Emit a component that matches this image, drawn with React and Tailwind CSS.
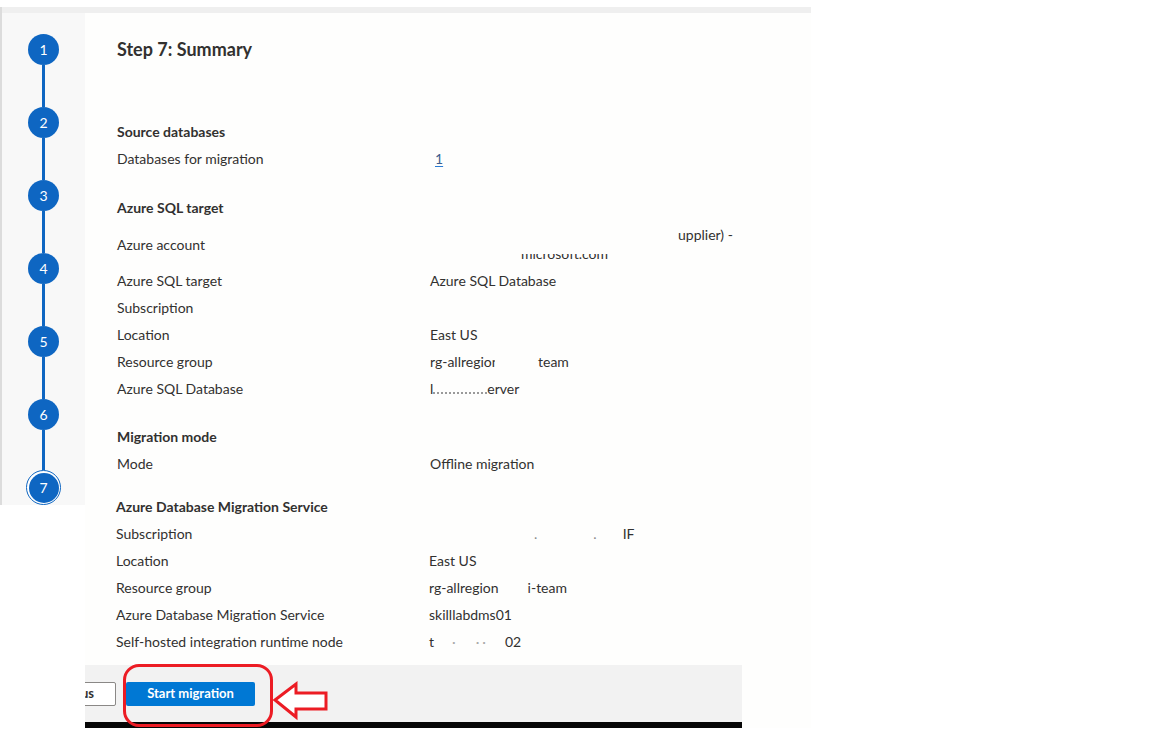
import React from "react";

const Circle = ({ n }) => (
  <div className="w-[31px] h-[31px] shrink-0 rounded-full bg-[#0e66c2] text-white text-[14px] flex items-center justify-center">
    {n}
  </div>
);

const Line = ({ h }) => <div className={`w-[3px] bg-[#0e66c2] ${h}`} />;

const Heading = ({ children }) => (
  <div className="h-[27px] flex items-center font-bold text-[#323130]">{children}</div>
);

const Row = ({ label, children, tall }) => (
  <div className={`flex items-center ${tall ? "h-[46px]" : "h-[27px]"}`}>
    <div className="w-[313px] shrink-0 whitespace-nowrap">{label}</div>
    <div className="whitespace-nowrap">{children}</div>
  </div>
);

export default function App() {
  return (
    <div className="relative w-[1152px] h-[740px] overflow-hidden bg-white pt-[7px] [font-family:Lato,'Segoe_UI',sans-serif] text-[14px] leading-[19px] text-[#323130]">
      <div className="h-[6px] w-[811px] bg-[#efefef] border-l-2 border-[#dcdcdc]" />
      <div className="flex">
        <aside className="w-[85px] h-[492px] shrink-0 border-l-2 border-[#dcdcdc] bg-[#f8f8f8] flex flex-col items-center pt-[21px]">
          <Circle n="1" />
          <Line h="h-[42px]" />
          <Circle n="2" />
          <Line h="h-[42px]" />
          <Circle n="3" />
          <Line h="h-[42px]" />
          <Circle n="4" />
          <Line h="h-[42px]" />
          <Circle n="5" />
          <Line h="h-[42px]" />
          <Circle n="6" />
          <Line h="h-[40px]" />
          <div className="w-[35px] h-[35px] rounded-full border-[1.5px] border-[#0e66c2] bg-white p-[1.5px]">
            <div className="w-full h-full rounded-full bg-[#0e66c2] text-white text-[14px] flex items-center justify-center">
              7
            </div>
          </div>
        </aside>

        <main className="w-[726px] bg-[#fefefd]">
          <div className="pl-[32px] pt-[24px]">
            <h1 className="h-[24px] leading-[24px] text-[18px] font-bold text-[#323130]">Step 7: Summary</h1>

            <section className="mt-[57px]">
              <Heading>Source databases</Heading>
              <Row label="Databases for migration">
                <span className="pl-[5px] text-[#3d5f8e] underline decoration-[#2b7cd3] underline-offset-2">1</span>
              </Row>
            </section>

            <section className="mt-[22px]">
              <Heading>Azure SQL target</Heading>
              <Row label="Azure account" tall>
                <div>
                  <div className="pl-[248px]">upplier) -</div>
                  <div className="pl-[91px] [clip-path:inset(10px_0_0_0)]">microsoft.com</div>
                </div>
              </Row>
              <Row label="Azure SQL target">Azure SQL Database</Row>
              <Row label="Subscription"></Row>
              <Row label="Location">East US</Row>
              <Row label="Resource group">
                <div className="flex">
                  <span className="inline-block w-[65px] overflow-hidden">rg-allregion</span>
                  <span className="ml-[43px]">team</span>
                </div>
              </Row>
              <Row label="Azure SQL Database">
                <div className="flex items-end">
                  <span>l</span>
                  <span className="inline-block w-[54px] mb-[4px] border-b-2 border-dotted border-[#9a9a9a]" />
                  <span>erver</span>
                </div>
              </Row>
            </section>

            <section className="mt-[21px]">
              <Heading>Migration mode</Heading>
              <Row label="Mode">Offline migration</Row>
            </section>

            <section className="mt-[16px] -ml-px">
              <Heading>Azure Database Migration Service</Heading>
              <Row label="Subscription">
                <div className="flex text-[#8a8a8a]">
                  <span className="pl-[105px]">.</span>
                  <span className="pl-[56px]">.</span>
                  <span className="pl-[26px] text-[#323130]">IF</span>
                </div>
              </Row>
              <Row label="Location">East US</Row>
              <Row label="Resource group">
                <div className="flex">
                  <span>rg-allregion</span>
                  <span className="ml-[29px]">i-team</span>
                </div>
              </Row>
              <Row label="Azure Database Migration Service">skilllabdms01</Row>
              <Row label="Self-hosted integration runtime node">
                <div className="flex">
                  <span>t</span>
                  <span className="pl-[18px] text-[#aaaaaa]">·</span>
                  <span className="pl-[20px] text-[#aaaaaa]">·</span>
                  <span className="pl-[3px] text-[#aaaaaa]">·</span>
                  <span className="pl-[22px] inline-block overflow-hidden">
                    <span className="inline-block -ml-[3px]">02</span>
                  </span>
                </div>
              </Row>
            </section>
          </div>

          <footer className="mt-[10px] w-[657px]">
            <div className="h-[57px] bg-[#f2f2f2] flex items-center overflow-hidden">
              <button className="ml-[-63px] w-[94px] h-[24px] shrink-0 rounded-[2px] border border-[#8a8886] bg-white text-[13px] font-bold text-[#323130]">
                Previous
              </button>
              <button className="ml-[10px] w-[129px] h-[24px] shrink-0 rounded-[2px] bg-[#0078d4] text-[13px] font-bold text-white">
                Start migration
              </button>
            </div>
            <div className="h-[6px] bg-[#060606]" />
          </footer>
        </main>
      </div>

      {/* red annotation */}
      <div className="absolute left-[123px] top-[664px] w-[150px] h-[63px] rounded-[16px] border-[3px] border-[#ec1c24]" />
      <svg className="absolute left-[271px] top-[680px]" width="60" height="42" viewBox="0 0 60 42">
        <polygon
          points="4,20 25,4 25,13 55,13 55,29 25,29 25,37"
          fill="white"
          stroke="#ec1c24"
          strokeWidth="3"
          strokeLinejoin="miter"
        />
      </svg>
    </div>
  );
}
